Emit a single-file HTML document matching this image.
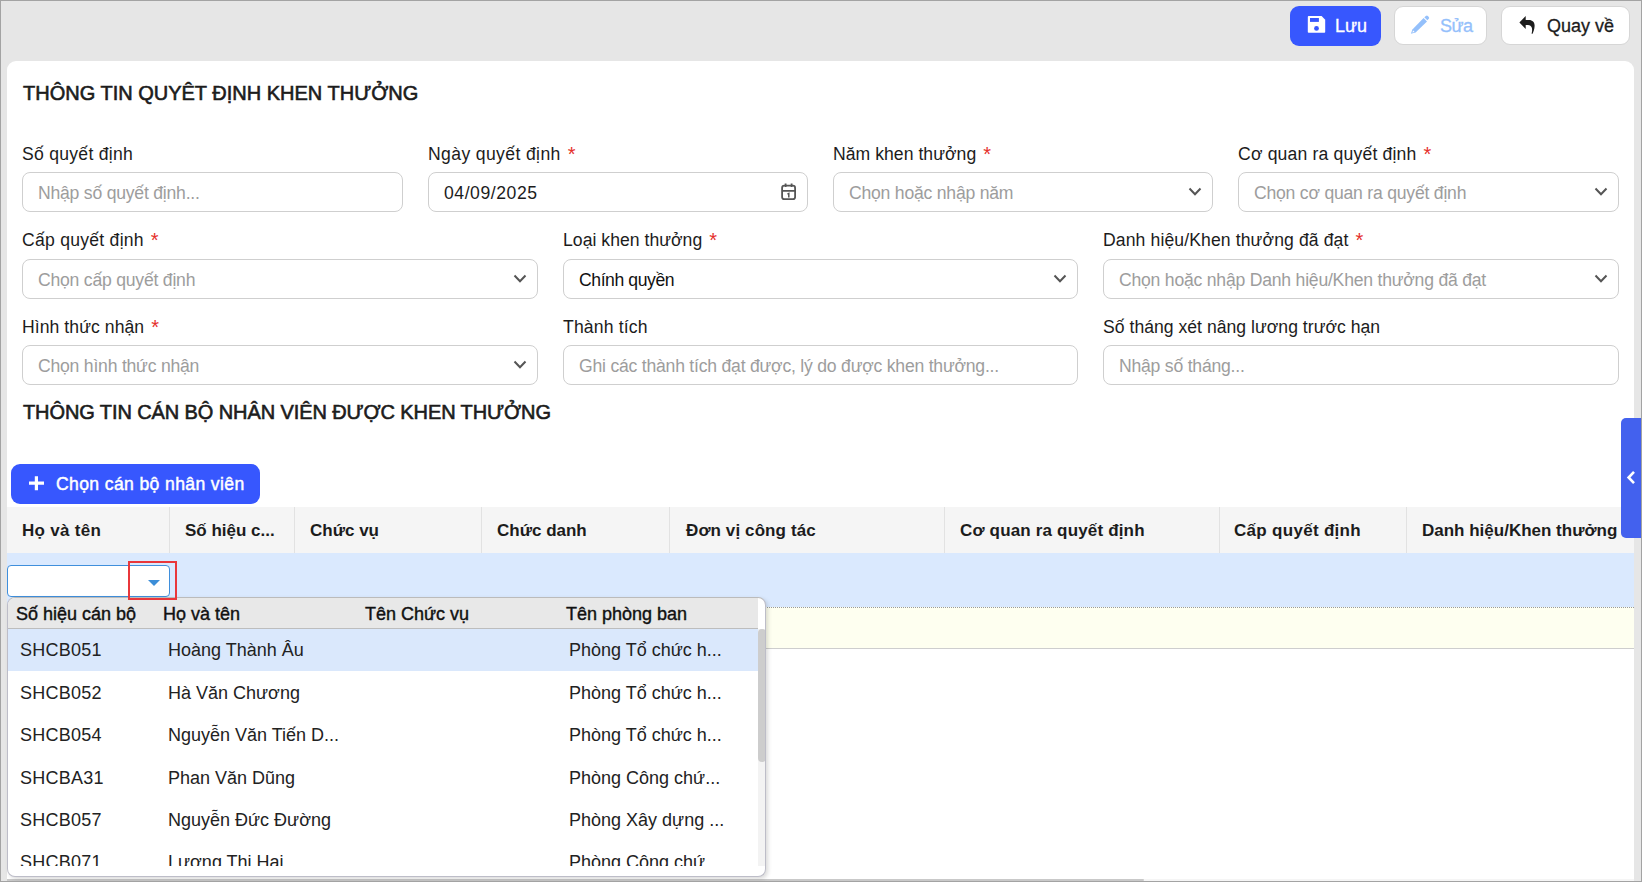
<!DOCTYPE html>
<html><head><meta charset="utf-8">
<style>
*{box-sizing:border-box;margin:0;padding:0}
html,body{width:1642px;height:882px;overflow:hidden;background:#e6e6e6;font-family:"Liberation Sans",sans-serif;color:#1c1c1c}
.frame{position:absolute;left:0;top:0;width:1642px;height:882px;border:1px solid #a3a3a3;pointer-events:none;z-index:100}
.abs{position:absolute}
.btn{position:absolute;border-radius:9px;font-size:17px;white-space:nowrap}
.card{position:absolute;left:7px;top:61px;width:1627px;height:830px;background:#fff;border-radius:9px 9px 0 0}
.title{position:absolute;left:23px;font-size:20px;font-weight:normal;-webkit-text-stroke:0.6px #1c1c1c;color:#1c1c1c;white-space:nowrap;letter-spacing:0px}
.lbl{position:absolute;font-size:17.6px;line-height:20px;white-space:nowrap;color:#1c1c1c;letter-spacing:0.42px}
.lbl b{color:#e5302c;font-weight:normal;margin-left:7px;letter-spacing:0;font-size:20px;line-height:0;position:relative;top:1px}
.inp{position:absolute;height:40px;border:1px solid #cfcfcf;border-radius:8px;background:#fff}
.ph{position:absolute;left:15px;top:9.5px;font-size:17.6px;white-space:nowrap;color:#9d9d9d;letter-spacing:-0.22px}
.val{color:#1c1c1c}
.chev{position:absolute;right:10px;top:14px;width:14px;height:10px}
.th{position:absolute;top:521px;font-size:17px;font-weight:bold;white-space:nowrap;color:#1c1c1c}
.sep{position:absolute;top:507px;width:1px;height:46px;background:#e2e2e2}
.pth{position:absolute;top:6px;font-size:18px;font-weight:normal;-webkit-text-stroke:0.4px #111;white-space:nowrap;color:#111}
.ptd{position:absolute;font-size:18px;white-space:nowrap;color:#222;letter-spacing:0px}
.tm{font-size:18px;-webkit-text-stroke:0.3px currentColor;line-height:22px}
</style></head><body>
<div class="frame"></div>

<!-- top buttons -->
<div class="btn" style="left:1290px;top:6px;width:91px;height:40px;background:#3757fe;color:#fff;">
  <svg class="abs" style="left:17px;top:9px" width="20" height="20" viewBox="0 0 20 20"><path d="M0.8 1.9Q0.8 1 1.7 1H14.6L18.2 4.7V17Q18.2 17.8 17.4 17.8H1.7Q0.8 17.8 0.8 17Z" fill="#fff"/><rect x="3" y="3" width="8.9" height="3.9" fill="#3757fe"/><circle cx="9.5" cy="13.4" r="2.4" fill="#3757fe"/></svg>
  <span class="abs tm" style="left:45px;top:9px;">Lưu</span>
</div>
<div class="btn" style="left:1394px;top:6px;width:93px;height:39px;background:#fff;border:1px solid #d6d6d6;color:#94c0fb;">
  <svg class="abs" style="left:15px;top:8px" width="20" height="20" viewBox="0 0 20 20"><path d="M0.9 18.8L2.4 14.4L13.6 3.0L17 6.4L5.6 17.6Z" fill="#94c0fb"/><path d="M3.3 15.6L4.6 16.9L2.2 17.6Z" fill="#fff"/><path d="M14.3 2.3L15.9 0.9Q16.9 0.1 17.8 0.9L18.8 1.9Q19.6 2.8 18.8 3.8L17.3 5.3Z" fill="#94c0fb"/></svg>
  <span class="abs tm" style="left:45px;top:8px;letter-spacing:-0.5px">Sửa</span>
</div>
<div class="btn" style="left:1501px;top:6px;width:129px;height:39px;background:#fff;border:1px solid #d6d6d6;color:#1c1c1c;">
  <svg class="abs" style="left:17px;top:9px" width="18" height="19" viewBox="0 0 18 19"><path d="M0.4 6.5L6.7 0.1V4H10C13.5 4 15.8 6.5 15.6 10C15.5 13 14.5 15.5 13.6 17.8H12.6C13.2 15 13.4 12.5 12.5 11C11.8 9.7 10.5 9 9 9H6.7V13Z" fill="#1c1c1c"/></svg>
  <span class="abs tm" style="left:45px;top:8px;">Quay về</span>
</div>

<div class="card"></div>
<div class="abs" style="left:7px;top:879px;width:1627px;height:2px;background:#f5f5f5"></div><div class="abs" style="left:7px;top:879px;width:1137px;height:2px;background:#c9c9c9;border-radius:0 1px 1px 0"></div>

<div class="title" style="top:82px">THÔNG TIN QUYÊT ĐỊNH KHEN THƯỞNG</div>

<!-- row 1 -->
<div class="lbl" style="left:22px;top:144px;letter-spacing:0.26px">Số quyết định</div>
<div class="inp" style="left:22px;top:172px;width:381px"><span class="ph">Nhập số quyết định...</span></div>

<div class="lbl" style="left:428px;top:144px;letter-spacing:0.37px">Ngày quyết định<b>*</b></div>
<div class="inp" style="left:428px;top:172px;width:380px"><span class="ph val" style="letter-spacing:0.55px;top:9.5px">04/09/2025</span><svg class="abs" style="left:351px;top:9px" width="18" height="19" viewBox="0 0 18 19"><rect x="2.1" y="3.7" width="13" height="13.5" rx="2.2" fill="none" stroke="#555" stroke-width="1.8"/><path d="M2 8.9h13.2M5.6 1.5v3.6M11.6 1.5v3.6" stroke="#555" stroke-width="1.8" fill="none"/><path d="M7.4 12.2l1.4-.7v4.1" stroke="#555" stroke-width="1.5" fill="none"/></svg></div>

<div class="lbl" style="left:833px;top:144px;letter-spacing:0.04px">Năm khen thưởng<b>*</b></div>
<div class="inp" style="left:833px;top:172px;width:380px"><span class="ph">Chọn hoặc nhập năm</span><svg class="chev" viewBox="0 0 14 10"><path d="M1.5 1.5L7 7.3l5.5-5.8" fill="none" stroke="#555" stroke-width="2"/></svg></div>

<div class="lbl" style="left:1238px;top:144px;letter-spacing:0.17px">Cơ quan ra quyết định<b>*</b></div>
<div class="inp" style="left:1238px;top:172px;width:381px"><span class="ph">Chọn cơ quan ra quyết định</span><svg class="chev" viewBox="0 0 14 10"><path d="M1.5 1.5L7 7.3l5.5-5.8" fill="none" stroke="#555" stroke-width="2"/></svg></div>

<!-- row 2 -->
<div class="lbl" style="left:22px;top:230px;letter-spacing:0.25px">Cấp quyết định<b>*</b></div>
<div class="inp" style="left:22px;top:259px;width:516px"><span class="ph">Chọn cấp quyết định</span><svg class="chev" viewBox="0 0 14 10"><path d="M1.5 1.5L7 7.3l5.5-5.8" fill="none" stroke="#555" stroke-width="2"/></svg></div>

<div class="lbl" style="left:563px;top:230px;letter-spacing:0.03px">Loại khen thưởng<b>*</b></div>
<div class="inp" style="left:563px;top:259px;width:515px"><span class="ph val" style="letter-spacing:-0.42px;color:#111">Chính quyền</span><svg class="chev" viewBox="0 0 14 10"><path d="M1.5 1.5L7 7.3l5.5-5.8" fill="none" stroke="#555" stroke-width="2"/></svg></div>

<div class="lbl" style="left:1103px;top:230px;letter-spacing:0.11px">Danh hiệu/Khen thưởng đã đạt<b>*</b></div>
<div class="inp" style="left:1103px;top:259px;width:516px"><span class="ph">Chọn hoặc nhập Danh hiệu/Khen thưởng đã đạt</span><svg class="chev" viewBox="0 0 14 10"><path d="M1.5 1.5L7 7.3l5.5-5.8" fill="none" stroke="#555" stroke-width="2"/></svg></div>

<!-- row 3 -->
<div class="lbl" style="left:22px;top:317px;letter-spacing:0.06px">Hình thức nhận<b>*</b></div>
<div class="inp" style="left:22px;top:345px;width:516px"><span class="ph">Chọn hình thức nhận</span><svg class="chev" viewBox="0 0 14 10"><path d="M1.5 1.5L7 7.3l5.5-5.8" fill="none" stroke="#555" stroke-width="2"/></svg></div>

<div class="lbl" style="left:563px;top:317px;letter-spacing:0.15px">Thành tích</div>
<div class="inp" style="left:563px;top:345px;width:515px"><span class="ph">Ghi các thành tích đạt được, lý do được khen thưởng...</span></div>

<div class="lbl" style="left:1103px;top:317px;letter-spacing:0.02px">Số tháng xét nâng lương trước hạn</div>
<div class="inp" style="left:1103px;top:345px;width:516px"><span class="ph">Nhập số tháng...</span></div>

<div class="title" style="top:401px;letter-spacing:-0.1px">THÔNG TIN CÁN BỘ NHÂN VIÊN ĐƯỢC KHEN THƯỞNG</div>


<!-- add button -->
<div class="btn" style="left:11px;top:464px;width:249px;height:40px;background:#3757fe;color:#fff;">
  <svg class="abs" style="left:17px;top:11px" width="17" height="17" viewBox="0 0 17 17"><path d="M8.4 1.2v14M1 8.2h15" stroke="#fff" stroke-width="3.2"/></svg>
  <span class="abs" style="left:45px;top:9.5px;font-size:17.6px;-webkit-text-stroke:0.45px #fff;letter-spacing:0.36px">Chọn cán bộ nhân viên</span>
</div>

<!-- table header -->
<div class="abs" style="left:7px;top:507px;width:1627px;height:46px;background:#f5f5f5;"></div>
<div class="th" style="left:22px;letter-spacing:0.3px">Họ và tên</div>
<div class="sep" style="left:169px"></div>
<div class="th" style="left:185px">Số hiệu c...</div>
<div class="sep" style="left:294px"></div>
<div class="th" style="left:310px">Chức vụ</div>
<div class="sep" style="left:481px"></div>
<div class="th" style="left:497px">Chức danh</div>
<div class="sep" style="left:669px"></div>
<div class="th" style="left:686px;letter-spacing:0.1px">Đơn vị công tác</div>
<div class="sep" style="left:944px"></div>
<div class="th" style="left:960px;letter-spacing:0.17px">Cơ quan ra quyết định</div>
<div class="sep" style="left:1219px"></div>
<div class="th" style="left:1234px;letter-spacing:0.3px">Cấp quyết định</div>
<div class="sep" style="left:1406px"></div>
<div class="th" style="left:1422px">Danh hiệu/Khen thưởng</div>

<!-- selected row -->
<div class="abs" style="left:7px;top:553px;width:1627px;height:54px;background:#dae9fe;"></div>
<!-- new row -->
<div class="abs" style="left:7px;top:607px;width:1627px;height:42px;background:#fefff0;border-top:1px dotted #9a9a9a;border-bottom:1px solid #cecece;"></div>

<!-- editor -->
<div class="abs" style="left:7px;top:565px;width:163px;height:32px;background:#fff;border:1px solid #3f8fdc;border-radius:4px;"></div>
<svg class="abs" style="left:148px;top:580px" width="12" height="6" viewBox="0 0 12 6"><path d="M0 0h12L6 6z" fill="#3c8ed8"/></svg>

<!-- side tab -->
<div class="abs" style="left:1621px;top:418px;width:21px;height:120px;background:#4361ee;border-radius:5px 0 0 5px;"></div>
<svg class="abs" style="left:1626px;top:470px" width="10" height="15" viewBox="0 0 10 15"><path d="M8 1.8L2.6 7.5 8 13.2" fill="none" stroke="#fff" stroke-width="2.6"/></svg>

<!-- popup -->
<div class="abs" style="left:7px;top:597px;width:759px;height:280px;background:#fff;border:1px solid #bdbdc8;border-top-color:#bbbbbb;border-radius:8px;box-shadow:2px 2px 4px rgba(0,0,0,.15);overflow:hidden;">
  <div class="abs" style="left:0;top:0;width:750px;height:31px;background:#e8e8e8;border-bottom:1px solid #bdbdbd;"></div>
  <div class="pth" style="left:8px">Số hiệu cán bộ</div>
  <div class="pth" style="left:155px">Họ và tên</div>
  <div class="pth" style="left:357px">Tên Chức vụ</div>
  <div class="pth" style="left:558px">Tên phòng ban</div>
  <div class="abs" style="left:0;top:31px;width:751px;height:42px;background:#dae8fc;"></div>
  <div class="abs" style="left:0;top:31px;width:751px;height:237px;overflow:hidden;">
    <div class="ptd" style="letter-spacing:0.25px;left:12px;top:11.3px">SHCB051</div><div class="ptd" style="left:160px;top:11.3px">Hoàng Thành Âu</div><div class="ptd" style="left:561px;top:11.3px">Phòng Tổ chức h...</div>
<div class="ptd" style="letter-spacing:0.25px;left:12px;top:53.7px">SHCB052</div><div class="ptd" style="left:160px;top:53.7px">Hà Văn Chương</div><div class="ptd" style="left:561px;top:53.7px">Phòng Tổ chức h...</div>
<div class="ptd" style="letter-spacing:0.25px;left:12px;top:96.1px">SHCB054</div><div class="ptd" style="left:160px;top:96.1px">Nguyễn Văn Tiến D...</div><div class="ptd" style="left:561px;top:96.1px">Phòng Tổ chức h...</div>
<div class="ptd" style="letter-spacing:0.25px;left:12px;top:138.5px">SHCBA31</div><div class="ptd" style="left:160px;top:138.5px">Phan Văn Dũng</div><div class="ptd" style="left:561px;top:138.5px">Phòng Công chứ...</div>
<div class="ptd" style="letter-spacing:0.25px;left:12px;top:180.9px">SHCB057</div><div class="ptd" style="left:160px;top:180.9px">Nguyễn Đức Đường</div><div class="ptd" style="left:561px;top:180.9px">Phòng Xây dựng ...</div>
<div class="ptd" style="letter-spacing:0.25px;left:12px;top:223.3px">SHCB071</div><div class="ptd" style="left:160px;top:223.3px">Lương Thị Hai</div><div class="ptd" style="left:561px;top:223.3px">Phòng Công chứ...</div>

  </div>
  <div class="abs" style="left:750px;top:31px;width:8px;height:237px;background:#f3f3f3;"></div>
  <div class="abs" style="left:750px;top:31px;width:8px;height:133px;background:#cdcdcd;border-radius:4px;"></div>
</div>
<div class="abs" style="left:128px;top:561px;width:49px;height:39px;border:2px solid #e9373b;"></div>
</body></html>
